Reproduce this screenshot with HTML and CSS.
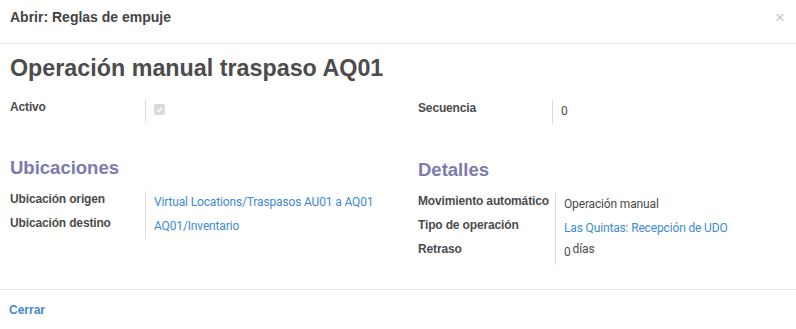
FILE: index.html
```html
<!doctype html>
<html lang="es">

<head>
    <meta charset="UTF-8">
    <title>Abrir: Reglas de empuje</title>
    <link rel="stylesheet" href="styles.css">
</head>

<body>
    <div class="modal">
        <div class="modal-header">
            <h4 class="modal-title">Abrir: Reglas de empuje</h4>
            <span class="close">×</span>
        </div>
        <div class="modal-body">
            <h1 class="record-name">Operación manual traspaso AQ01</h1>

            <div class="columns">
                <div class="column">
                    <div class="field">
                        <div class="label">Activo</div>
                        <div class="value"><span class="checkbox"><svg width="11" height="11" viewBox="0 0 11 11"><path d="M3 5.6 L4.8 7.4 L8.2 3.8" fill="none" stroke="#fff" stroke-width="1.4"/></svg></span></div>
                    </div>

                    <h2 class="group-title">Ubicaciones</h2>
                    <div class="field">
                        <div class="label">Ubicación origen</div>
                        <div class="value"><a href="#">Virtual Locations/Traspasos AU01 a AQ01</a></div>
                    </div>
                    <div class="field">
                        <div class="label">Ubicación destino</div>
                        <div class="value"><a href="#">AQ01/Inventario</a></div>
                    </div>
                </div>

                <div class="column right">
                    <div class="field narrow">
                        <div class="label">Secuencia</div>
                        <div class="value">0</div>
                    </div>

                    <h2 class="group-title">Detalles</h2>
                    <div class="field wide">
                        <div class="label">Movimiento automático</div>
                        <div class="value">Operación manual</div>
                    </div>
                    <div class="field wide">
                        <div class="label">Tipo de operación</div>
                        <div class="value"><a href="#">Las Quintas: Recepción de UDO</a></div>
                    </div>
                    <div class="field wide">
                        <div class="label">Retraso</div>
                        <div class="value inline"><span class="num">0</span>días</div>
                    </div>
                </div>
            </div>
        </div>
        <div class="modal-footer">
            <a href="#" class="btn-close">Cerrar</a>
        </div>
    </div>
</body>

</html>
```

FILE: styles.css
```css
* {
    margin: 0;
    padding: 0;
    box-sizing: border-box;
}
body {
    font-family: "Liberation Sans", Arial, sans-serif;
    font-size: 12px;
    color: #4c4c4c;
    background: #fff;
}
a {
    text-decoration: none;
    color: #3f8ad3;
}

/* cabecera */
.modal-header {
    display: flex;
    align-items: flex-start;
    height: 44px;
    padding: 7px 10px 0;
    border-bottom: 1px solid #e5e5e5;
}
.modal-title {
    font-size: 14px;
    line-height: 20px;
    font-weight: bold;
    color: #444;
}
.close {
    margin-left: auto;
    margin-top: 1px;
    margin-right: 1px;
    font-size: 17px;
    line-height: 20px;
    color: #c8c8c8;
}

/* cuerpo */
.modal-body {
    padding: 8px 10px 24px;
}
.record-name {
    font-size: 23.3px;
    line-height: 32px;
    font-weight: bold;
    color: #4c4c4c;
    margin-bottom: 15px;
}
.columns {
    display: grid;
    grid-template-columns: 408px 1fr;
}
.column.right {
    padding-top: 1px;
}
.group-title {
    font-size: 18.5px;
    line-height: 24px;
    font-weight: bold;
    color: #7c7bad;
    margin-top: 33px;
    margin-bottom: 11px;
}
.right .group-title {
    margin-top: 34px;
}
.field {
    display: grid;
    grid-template-columns: 135px 1fr;
    height: 24px;
}
.field.narrow {
    grid-template-columns: 134px 1fr;
}
.field.wide {
    grid-template-columns: 137px 1fr;
}
.label {
    font-size: 12px;
    line-height: 16px;
    font-weight: bold;
    letter-spacing: -0.15px;
    color: #4c4c4c;
}
.value {
    border-left: 1px solid #dcdcdc;
    padding: 3px 0 0 8px;
    font-family: Roboto, "Liberation Sans", sans-serif;
    font-size: 12px;
    line-height: 16px;
    letter-spacing: -0.15px;
    color: #4c4c4c;
}
.value.inline {
    padding-top: 0;
}
.checkbox {
    display: inline-block;
    width: 11px;
    height: 11px;
    margin-top: 2px;
    vertical-align: top;
    background: #d9d9d9;
    border-radius: 2px;
}
.checkbox svg {
    display: block;
}
.num {
    display: inline-block;
    margin-top: 3px;
    margin-right: 2px;
    vertical-align: top;
}

/* pie */
.modal-footer {
    border-top: 1px solid #e5e5e5;
    padding: 12px 9px;
}
.btn-close {
    font-size: 12px;
    line-height: 16px;
    font-weight: bold;
    color: #3f8ad3;
}
```
